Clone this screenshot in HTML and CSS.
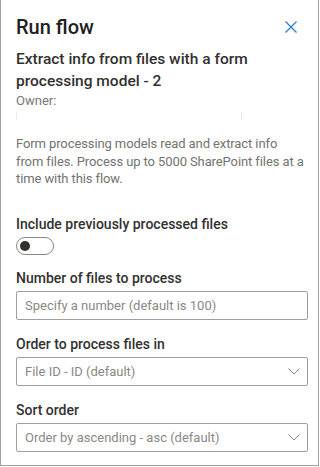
FILE: index.html
```html
<!DOCTYPE html>
<html lang="en">
<head>
  <meta charset="UTF-8">
  <meta name="viewport" content="width=device-width, initial-scale=1.0">
  <title>Run flow</title>
  <link rel="stylesheet" href="styles.css">
</head>
<body>

<div class="panel">
  <div class="header">
    <h1 class="title">Run flow</h1>
    <button class="close" aria-label="Close">
      <svg width="12" height="12" viewBox="0 0 12 12">
        <path d="M0.5 0.5 L11.5 11.5 M11.5 0.5 L0.5 11.5" stroke="#2b7cd3" stroke-width="1.3" fill="none"/>
      </svg>
    </button>
  </div>

  <div class="flow-name">Extract info from files with a form processing model - 2</div>
  <div class="owner">Owner:</div>
  <div class="owner-name"></div>

  <p class="description">Form processing models read and extract info<br>from files. Process up to 5000 SharePoint files at a time with this flow.</p>

  <div class="field first">
    <label class="label">Include previously processed files</label>
    <div class="toggle"><span class="knob"></span></div>
  </div>

  <div class="field">
    <label class="label" for="fileCount">Number of files to process</label>
    <input class="textbox" id="fileCount" type="text" placeholder="Specify a number (default is 100)">
  </div>

  <div class="field">
    <label class="label">Order to process files in</label>
    <div class="dropdown">
      <span>File ID - ID (default)</span>
      <svg width="12" height="7" viewBox="0 0 12 7">
        <path d="M0.5 0.5 L6 6 L11.5 0.5" stroke="#8a8886" stroke-width="1" fill="none"/>
      </svg>
    </div>
  </div>

  <div class="field">
    <label class="label">Sort order</label>
    <div class="dropdown">
      <span>Order by ascending - asc (default)</span>
      <svg width="12" height="7" viewBox="0 0 12 7">
        <path d="M0.5 0.5 L6 6 L11.5 0.5" stroke="#8a8886" stroke-width="1" fill="none"/>
      </svg>
    </div>
  </div>
</div>

</body>
</html>
```

FILE: styles.css
```css
body {
  margin: 0;
  padding: 0;
  background-color: #fff;
  font-family: Roboto, "Open Sans", sans-serif;
  color: #323130;
}

.panel {
  box-sizing: border-box;
  width: 319px;
  height: 466px;
  border: 1px solid #a0a0a0;
  border-top: none;
  padding: 14px 10px 0 15px;
  overflow: hidden;
}

.header {
  display: flex;
  justify-content: space-between;
  align-items: center;
}

.title {
  margin: 0;
  font-size: 20px;
  font-weight: 500;
  line-height: 26px;
  color: #201f1e;
}

.close {
  border: none;
  background: none;
  padding: 0;
  margin-right: 11px;
  width: 12px;
  height: 12px;
  display: flex;
}

.flow-name {
  margin-top: 8px;
  font-size: 15.5px;
  font-weight: 500;
  line-height: 22px;
  color: #323130;
}

.owner {
  margin-top: 0;
  font-size: 13px;
  line-height: 18px;
  color: #797775;
}

.owner-name {
  width: 224px;
  height: 8px;
  margin-top: 2px;
  border-left: 1px solid #ececec;
  border-right: 1px solid #ececec;
}

.description {
  margin: 15px 0 0;
  font-size: 13px;
  letter-spacing: -0.1px;
  line-height: 17.5px;
  color: #737270;
}

.field {
  margin-top: 14px;
}

.field.first {
  margin-top: 26px;
}

.field.first + .field {
  margin-top: 13px;
}

.label {
  display: block;
  font-size: 14px;
  font-weight: 500;
  line-height: 20px;
  color: #323130;
  margin-bottom: 3px;
}

.toggle {
  box-sizing: border-box;
  width: 38px;
  height: 18px;
  margin-top: 2px;
  border: 1px solid #8a8886;
  border-radius: 9px;
  display: flex;
  align-items: center;
  padding-left: 3px;
}

.knob {
  width: 10px;
  height: 10px;
  border-radius: 50%;
  background-color: #323130;
}

.textbox,
.dropdown {
  box-sizing: border-box;
  width: 292px;
  height: 29px;
  border: 1px solid #a19f9d;
  border-radius: 2px;
  font-family: inherit;
  font-size: 13px;
  color: #8a8886;
  padding: 0 8px;
}

.textbox::placeholder {
  color: #8a8886;
}

.dropdown {
  display: flex;
  justify-content: space-between;
  align-items: center;
  padding-right: 7px;
}
```
